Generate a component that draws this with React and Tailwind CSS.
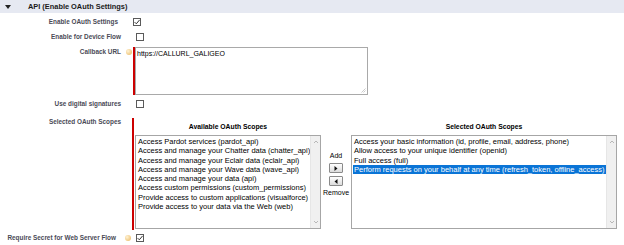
const Check = ({ checked }) => (
  <svg width="8" height="8" viewBox="0 0 8 8" className="block shrink-0">
    <rect x="0.5" y="0.5" width="7" height="7" fill="#fff" stroke="#5a5a5a" strokeWidth="1" />
    {checked && <path d="M1.6 4.1 L3.3 5.8 L6.6 1.9" fill="none" stroke="#333" strokeWidth="1" />}
  </svg>
);

const Help = () => (
  <span className="block w-[6px] h-[6px] rounded-full bg-[radial-gradient(circle_at_35%_35%,#fff3d6,#e9b55a)] shrink-0" />
);

const Label = ({ children, className = "" }) => (
  <div className={`text-[6.4px] font-bold text-[#4a4a56] leading-[9px] text-right whitespace-nowrap ${className}`}>{children}</div>
);

const ListBox = ({ items, selected, className }) => (
  <div className={`relative border border-[#a6a6a6] bg-white flex ${className}`}>
    <div className="flex-1 min-w-0 pt-[1px] pl-[1px] text-[7.5px] leading-[9.3px] text-black whitespace-nowrap">
      {items.map((it, i) => (
        <div key={i} className={i === selected ? "bg-[#0a74d6] text-white pl-[1px]" : "pl-[1px]"}>{it}</div>
      ))}
    </div>
    <div className="w-[10px] shrink-0 bg-[#f0f0f0] border-l border-[#e6e6e6] flex flex-col justify-between items-center text-[#a0a0a0]">
      <svg width="6" height="6" viewBox="0 0 6 6" className="mt-[3px]"><path d="M1 4 L3 2 L5 4" fill="none" stroke="#a8a8a8" strokeWidth="0.8" /></svg>
      <svg width="6" height="6" viewBox="0 0 6 6" className="mb-[3px]"><path d="M1 2 L3 4 L5 2" fill="none" stroke="#a8a8a8" strokeWidth="0.8" /></svg>
    </div>
  </div>
);

const ArrowBtn = ({ dir }) => (
  <div className="w-[14px] h-[10px] border border-[#8a8a8a] rounded-[1px] bg-[linear-gradient(#ffffff,#dcdcdc)] flex items-center justify-center">
    <svg width="4" height="5" viewBox="0 0 4 5">
      {dir === "right" ? <path d="M0.5 0 L3.5 2.5 L0.5 5 Z" fill="#111" /> : <path d="M3.5 0 L0.5 2.5 L3.5 5 Z" fill="#111" />}
    </svg>
  </div>
);

export default function App() {
  const available = [
    "Access Pardot services (pardot_api)",
    "Access and manage your Chatter data (chatter_api)",
    "Access and manage your Eclair data (eclair_api)",
    "Access and manage your Wave data (wave_api)",
    "Access and manage your data (api)",
    "Access custom permissions (custom_permissions)",
    "Provide access to custom applications (visualforce)",
    "Provide access to your data via the Web (web)",
  ];
  const chosen = [
    "Access your basic information (id, profile, email, address, phone)",
    "Allow access to your unique identifier (openid)",
    "Full access (full)",
    "Perform requests on your behalf at any time (refresh_token, offline_access)",
  ];
  return (
    <div className="w-[624px] h-[245px] bg-white overflow-hidden font-['Liberation_Sans',Arial,sans-serif]">
      {/* Header */}
      <div className="h-[13px] bg-[#e6e9f2] flex items-center">
        <svg width="6" height="4" viewBox="0 0 6 4" className="ml-[5px]"><path d="M0 0 L6 0 L3 4 Z" fill="#222" /></svg>
        <span className="ml-[17px] text-[7.4px] font-bold text-[#1a1a1a] leading-[9px]">API (Enable OAuth Settings)</span>
      </div>

      {/* Enable OAuth Settings */}
      <div className="mt-[4px] h-[9px] flex items-center">
        <Label className="w-[118px]">Enable OAuth Settings</Label>
        <div className="ml-[15px]"><Check checked /></div>
      </div>

      {/* Enable for Device Flow */}
      <div className="mt-[6px] h-[9px] flex items-center">
        <Label className="w-[121px]">Enable for Device Flow</Label>
        <div className="ml-[15px]"><Check /></div>
      </div>

      {/* Callback URL */}
      <div className="mt-[6px] flex">
        <div className="w-[121px] pt-[0px]"><Label>Callback URL</Label></div>
        <div className="ml-[5px] mt-[2px]"><Help /></div>
        <div className="ml-[1px] w-[2px] h-[48px] bg-[#cc0000]" />
        <div className="relative w-[233px] h-[48px] border border-[#a9a9a9] bg-white">
          <div className="pl-[1px] pt-[1px] text-[7px] leading-[9px] text-black">https://CALLURL_GALIGEO</div>
          <svg width="5" height="5" viewBox="0 0 5 5" className="absolute right-[1px] bottom-[1px]">
            <path d="M4.5 0.5 L0.5 4.5 M4.5 2.5 L2.5 4.5" stroke="#aaa" strokeWidth="0.6" />
          </svg>
        </div>
      </div>

      {/* Use digital signatures */}
      <div className="mt-[4px] h-[9px] flex items-center">
        <Label className="w-[121px]">Use digital signatures</Label>
        <div className="ml-[15px]"><Check /></div>
      </div>

      {/* Selected OAuth Scopes */}
      <div className="mt-[10px] flex">
        <div className="w-[121px]"><Label className="-mt-[1px]">Selected OAuth Scopes</Label></div>
        <div className="ml-[11px] w-[2px] h-[112px] bg-[#cc0000]" />
        <div className="ml-[1px] flex">
          <div className="flex flex-col">
            <div className="h-[17px] pt-[5px] text-center text-[6.8px] font-bold leading-[8px] text-black">Available OAuth Scopes</div>
            <ListBox items={available} selected={-1} className="w-[186px] h-[94px]" />
          </div>
          <div className="w-[30px] flex flex-col items-center pt-[34px] text-[7px] leading-[8px] text-black">
            <div>Add</div>
            <div className="mt-[3px]"><ArrowBtn dir="right" /></div>
            <div className="mt-[3px]"><ArrowBtn dir="left" /></div>
            <div className="mt-[3px]">Remove</div>
          </div>
          <div className="flex flex-col">
            <div className="h-[17px] pt-[5px] text-center text-[6.8px] font-bold leading-[8px] text-black">Selected OAuth Scopes</div>
            <ListBox items={chosen} selected={3} className="w-[266px] h-[94px]" />
          </div>
        </div>
      </div>

      {/* Require Secret */}
      <div className="mt-[3px] h-[9px] flex items-center">
        <Label className="w-[116px]">Require Secret for Web Server Flow</Label>
        <div className="ml-[9px]"><Help /></div>
        <div className="ml-[5px]"><Check checked /></div>
      </div>
    </div>
  );
}
